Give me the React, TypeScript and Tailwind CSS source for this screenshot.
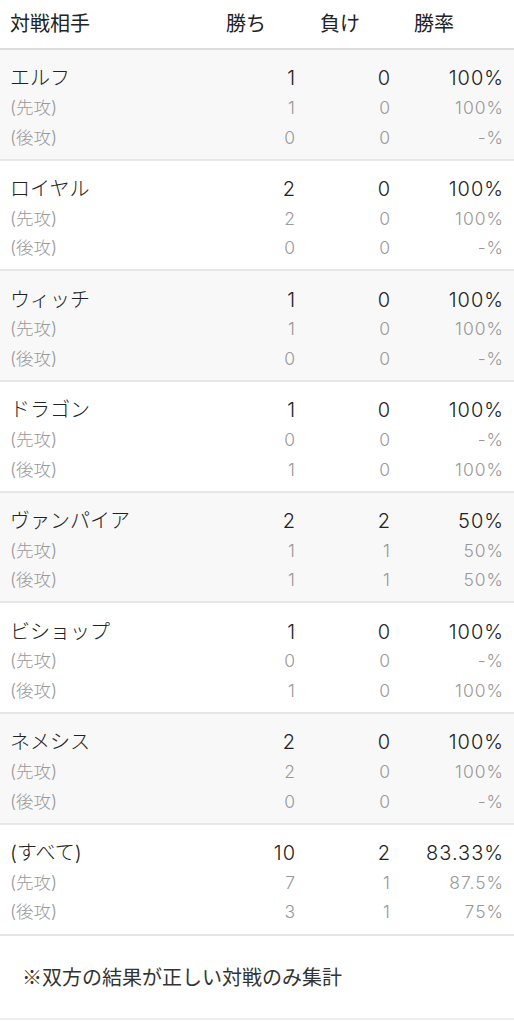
const groups = [
  { name: 'エルフ', rows: [['1', '0', '100%'], ['1', '0', '100%'], ['0', '0', '-%']] },
  { name: 'ロイヤル', rows: [['2', '0', '100%'], ['2', '0', '100%'], ['0', '0', '-%']] },
  { name: 'ウィッチ', rows: [['1', '0', '100%'], ['1', '0', '100%'], ['0', '0', '-%']] },
  { name: 'ドラゴン', rows: [['1', '0', '100%'], ['0', '0', '-%'], ['1', '0', '100%']] },
  { name: 'ヴァンパイア', rows: [['2', '2', '50%'], ['1', '1', '50%'], ['1', '1', '50%']] },
  { name: 'ビショップ', rows: [['1', '0', '100%'], ['0', '0', '-%'], ['1', '0', '100%']] },
  { name: 'ネメシス', rows: [['2', '0', '100%'], ['2', '0', '100%'], ['0', '0', '-%']] },
  { name: '(すべて)', rows: [['10', '2', '83.33%'], ['7', '1', '87.5%'], ['3', '1', '75%']] },
];

const subLabels = ['(先攻)', '(後攻)'];

function Row({ label, values, main }: { label: string; values: string[]; main: boolean }) {
  const tone = main ? 'text-[#222] text-[20px]' : 'text-[#999] text-[17.5px]';
  return (
    <div className={`grid grid-cols-[1fr_94px_94px_110px] h-[29.5px] items-center leading-none font-light ${tone}`}>
      <div className="pl-[10px]">{label}</div>
      <div className="text-right pr-[14px] tracking-[1px]">{values[0]}</div>
      <div className="text-right pr-[13px] tracking-[1px]">{values[1]}</div>
      <div className="text-right pr-[10px] tracking-[1px]">{values[2]}</div>
    </div>
  );
}

export default function App() {
  return (
    <div className="w-[514px] h-[1024px] bg-white overflow-hidden" style={{ fontFamily: 'Inter, "Noto Sans CJK JP", sans-serif' }}>
      {/* Header */}
      <div className="grid grid-cols-[1fr_94px_94px_110px] h-[50px] items-center text-[20px] text-[#222] border-b-2 border-[#dddddd]">
        <div className="pl-[10px]">対戦相手</div>
        <div className="pl-[10px]">勝ち</div>
        <div className="pl-[10px]">負け</div>
        <div className="pl-[10px]">勝率</div>
      </div>

      {/* Groups */}
      {groups.map((g, i) => (
        <div
          key={g.name}
          className={`h-[110.7px] pt-[13.5px] border-b-2 border-[#e6e6e6] ${i % 2 === 0 ? 'bg-[#f8f8f8]' : 'bg-white'}`}
        >
          <Row label={g.name} values={g.rows[0]} main />
          <Row label={subLabels[0]} values={g.rows[1]} main={false} />
          <Row label={subLabels[1]} values={g.rows[2]} main={false} />
        </div>
      ))}

      {/* Note */}
      <div
        className="h-[84px] flex items-center pl-[22px] text-[20px] text-[#333] border-b-2 border-[#eeeeee]"
        style={{ fontFamily: '"Noto Sans CJK JP", sans-serif' }}
      >
        ※双方の結果が正しい対戦のみ集計
      </div>
    </div>
  );
}
